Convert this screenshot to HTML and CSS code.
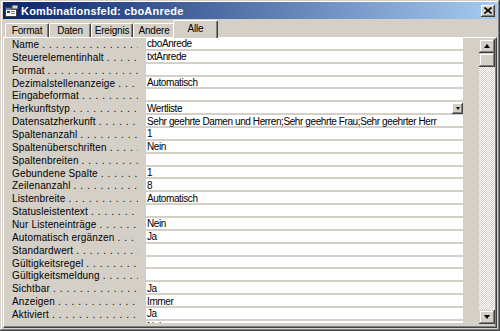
FILE: index.html
```html
<!DOCTYPE html>
<html>
<head>
<meta charset="utf-8">
<title>Kombinationsfeld: cboAnrede</title>
<link rel="stylesheet" href="styles.css">
</head>
<body>
<div class="window">
    <div class="titlebar">
        <svg class="icon" width="13" height="12" viewBox="0 0 13 12">
            <rect x="0.5" y="2.5" width="11" height="9" fill="#fff" stroke="#404040"/>
            <rect x="1" y="3" width="10" height="2" fill="#6a7a9a"/>
            <rect x="2" y="6" width="3" height="2" fill="#404040"/>
            <rect x="6" y="6" width="4" height="1" fill="#808080"/>
            <rect x="6" y="8" width="4" height="1" fill="#808080"/>
            <rect x="7" y="0" width="6" height="4" fill="#d4d0c8" stroke="#404040" stroke-width="1"/>
        </svg>
        <span class="title">Kombinationsfeld: cboAnrede</span>
        <button class="close">
            <svg width="8" height="7" viewBox="0 0 8 7"><path d="M0.5 0.5 L7.5 6.5 M7.5 0.5 L0.5 6.5" stroke="#000" stroke-width="1.6"/></svg>
        </button>
    </div>
    <div class="tabs">
        <span class="tab tab-format">Format</span>
        <span class="tab">Daten</span>
        <span class="tab">Ereignis</span>
        <span class="tab">Andere</span>
        <span class="tab active">Alle</span>
    </div>
    <div class="panel">
        <div class="props">
            <div class="row"><span class="label">Name</span><span class="value">cboAnrede</span></div>
            <div class="row"><span class="label">Steuerelementinhalt</span><span class="value">txtAnrede</span></div>
            <div class="row"><span class="label">Format</span><span class="value"></span></div>
            <div class="row"><span class="label">Dezimalstellenanzeige</span><span class="value">Automatisch</span></div>
            <div class="row"><span class="label">Eingabeformat</span><span class="value"></span></div>
            <div class="row"><span class="label">Herkunftstyp</span><span class="value">Wertliste<span class="drop"></span></span></div>
            <div class="row"><span class="label">Datensatzherkunft</span><span class="value">Sehr geehrte Damen und Herren;Sehr geehrte Frau;Sehr geehrter Herr</span></div>
            <div class="row"><span class="label">Spaltenanzahl</span><span class="value">1</span></div>
            <div class="row"><span class="label">Spaltenüberschriften</span><span class="value">Nein</span></div>
            <div class="row"><span class="label">Spaltenbreiten</span><span class="value"></span></div>
            <div class="row"><span class="label">Gebundene Spalte</span><span class="value">1</span></div>
            <div class="row"><span class="label">Zeilenanzahl</span><span class="value">8</span></div>
            <div class="row"><span class="label">Listenbreite</span><span class="value">Automatisch</span></div>
            <div class="row"><span class="label">Statusleistentext</span><span class="value"></span></div>
            <div class="row"><span class="label">Nur Listeneinträge</span><span class="value">Nein</span></div>
            <div class="row"><span class="label">Automatisch ergänzen</span><span class="value">Ja</span></div>
            <div class="row"><span class="label">Standardwert</span><span class="value"></span></div>
            <div class="row"><span class="label">Gültigkeitsregel</span><span class="value"></span></div>
            <div class="row"><span class="label">Gültigkeitsmeldung</span><span class="value"></span></div>
            <div class="row"><span class="label">Sichtbar</span><span class="value">Ja</span></div>
            <div class="row"><span class="label">Anzeigen</span><span class="value">Immer</span></div>
            <div class="row"><span class="label">Aktiviert</span><span class="value">Ja</span></div>
            <div class="row"><span class="label">Gesperrt</span><span class="value">Nein</span></div>
        </div>
        <div class="scrollbar">
            <span class="sbtn"><span class="arrow up"></span></span>
            <span class="thumb"></span>
            <span class="track"></span>
            <span class="sbtn"><span class="arrow down"></span></span>
        </div>
    </div>
</div>
</body>
</html>
```
FILE: styles.css
```css
body {
    margin: 0;
    width: 500px;
    height: 331px;
    overflow: hidden;
    font-family: "Liberation Sans", Arial, sans-serif;
    font-size: 10px;
    color: #000;
}

.window {
    width: 500px;
    height: 331px;
    box-sizing: border-box;
    padding: 2px 3px 3px 3px;
    background: #d4d0c8;
    display: flex;
    flex-direction: column;
    box-shadow: inset -1px -1px #404040, inset 1px 1px #d4d0c8, inset -2px -2px #808080, inset 2px 2px #fff;
}

.titlebar {
    height: 17px;
    flex: none;
    display: flex;
    align-items: center;
    padding-left: 2px;
    background: linear-gradient(to right, #0a246a, #a6caf0);
}

.icon {
    margin-right: 3px;
}

.title {
    color: #fff;
    font-weight: bold;
    font-size: 11px;
    letter-spacing: 0.2px;
}

.close {
    margin-left: auto;
    margin-right: 2px;
    width: 14px;
    height: 12px;
    padding: 0;
    border: none;
    background: #d4d0c8;
    display: flex;
    align-items: center;
    justify-content: center;
    box-shadow: inset -1px -1px #404040, inset 1px 1px #fff, inset -2px -2px #808080;
}

.tabs {
    height: 18px;
    flex: none;
    display: flex;
    align-items: flex-end;
    padding-left: 2px;
    letter-spacing: -0.2px;
}

.tab {
    height: 14px;
    width: 42px;
    box-sizing: border-box;
    display: flex;
    align-items: center;
    justify-content: center;
    border-top: 1px solid #fff;
    border-left: 1px solid #fff;
    border-right: 1px solid #404040;
    border-radius: 2px 2px 0 0;
    box-shadow: inset -1px 0 #808080;
}

.tab-format {
    width: 44px;
}

.tab.active {
    width: 45px;
    height: 18px;
    margin: 0 -2px -1px -2px;
    padding-bottom: 3px;
    background: #d4d0c8;
    position: relative;
    z-index: 1;
}

.panel {
    flex: 1;
    display: flex;
    align-items: flex-start;
    border-top: 1px solid #fff;
    border-left: 1px solid #fff;
    border-right: 1px solid #404040;
    border-bottom: 1px solid #404040;
    box-shadow: inset -1px -1px #808080;
}

.props {
    width: 459px;
    height: 285px;
    overflow: hidden;
    margin-right: 16px;
}

.row {
    height: 12.87px;
    display: grid;
    grid-template-columns: 142px 317px;
}

.label {
    display: flex;
    align-items: center;
    padding: 0 8px 0 8px;
    white-space: nowrap;
    overflow: hidden;
    letter-spacing: 0.15px;
}

.label::after {
    content: ". . . . . . . . . . . . . . . . . . . . . . . . . . . . . . .";
    flex: 1;
    min-width: 0;
    overflow: hidden;
    margin-left: 3px;
    letter-spacing: 0.6px;
}

.value {
    display: flex;
    align-items: center;
    padding-left: 1px;
    white-space: nowrap;
    overflow: hidden;
    letter-spacing: -0.4px;
    background: linear-gradient(to bottom, #fff 0, #fff calc(100% - 1.6px), #d4d0c8 calc(100% - 1.6px));
    padding-bottom: 1px;
}

.drop {
    margin-left: auto;
    width: 11px;
    height: 11px;
    background: #d4d0c8;
    box-shadow: inset -1px -1px #404040, inset 1px 1px #fff, inset -2px -2px #808080;
    display: flex;
    align-items: center;
    justify-content: center;
}

.drop::before {
    content: "";
    border-left: 2.5px solid transparent;
    border-right: 2.5px solid transparent;
    border-top: 3px solid #000;
}

.scrollbar {
    width: 16px;
    height: 285px;
    margin-top: 1px;
    display: flex;
    flex-direction: column;
}

.sbtn, .thumb {
    height: 14px;
    flex: none;
    background: #d4d0c8;
    box-shadow: inset -1px -1px #404040, inset 1px 1px #d4d0c8, inset -2px -2px #808080, inset 2px 2px #fff;
    display: flex;
    align-items: center;
    justify-content: center;
}

.track {
    flex: 1;
    background: repeating-conic-gradient(#d4d0c8 0 25%, #fff 0 50%) 0 0 / 2px 2px;
}

.arrow {
    border-left: 3.5px solid transparent;
    border-right: 3.5px solid transparent;
}

.arrow.up {
    border-bottom: 4px solid #000;
}

.arrow.down {
    border-top: 4px solid #000;
}
```
